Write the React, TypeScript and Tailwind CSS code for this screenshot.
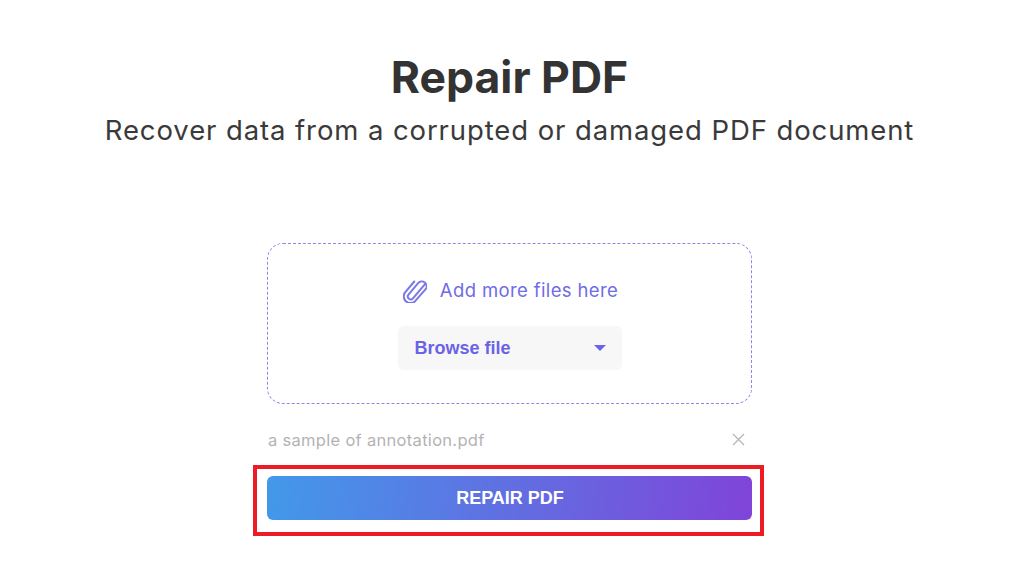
import React from "react";

export default function App() {
  return (
    <div className="w-[1019px] h-[568px] bg-white flex flex-col items-center overflow-hidden font-['Inter','Liberation_Sans',sans-serif]">
      <h1 className="mt-[52px] h-[50px] leading-[50px] text-[44.5px] font-bold text-[#333333] whitespace-nowrap">Repair PDF</h1>
      <p className="mt-[13px] h-[30px] leading-[30px] text-[27.5px] text-[#3a3a3a] tracking-[0.9px] whitespace-nowrap">Recover data from a corrupted or damaged PDF document</p>
      <div className="mt-[98px] w-[485px] h-[161px] rounded-[16px] border border-dashed border-[#8f84f0] flex flex-col items-center">
        <div className="mt-[34px] ml-[2px] h-[26px] flex items-center gap-[13px] text-[#6f6ce6]">
          <svg width="24" height="24" viewBox="2.5 1.5 20 20" fill="none" stroke="#7b78e8" strokeWidth="1.7" strokeLinecap="round" strokeLinejoin="round">
            <path d="M20.5 6.2 10.8 17.6a2.4 2.4 0 0 1-3.7-3.1l8-9.5a4 4 0 0 1 6.1 5.2L12.6 20a5.6 5.6 0 0 1-8.5-7.2l7.8-9.2" />
          </svg>
          <span className="text-[18.5px] tracking-[0.37px] whitespace-nowrap">Add more files here</span>
        </div>
        <div className="mt-[22px] w-[224px] h-[44px] rounded-[6px] bg-[#f7f7f8] flex items-center justify-between pl-[17px] pr-[16px]">
          <span className="font-['Liberation_Sans',sans-serif] font-bold text-[18px] text-[#6a63e6]">Browse file</span>
          <span className="w-0 h-0 border-l-[6px] border-r-[6px] border-t-[6px] border-l-transparent border-r-transparent border-t-[#6a63e6]"></span>
        </div>
      </div>
      <div className="mt-[23px] w-[485px] h-[26px] flex items-center justify-between">
        <span className="ml-[1px] text-[16.5px] text-[#b3b3b3] tracking-[0.3px] whitespace-nowrap">a sample of annotation.pdf</span>
        <svg className="mr-[7px] mb-[2px]" width="13" height="13" viewBox="0 0 13 13" fill="none" stroke="#b5b5b5" strokeWidth="1.3">
          <path d="M1 1l11 11M12 1 1 12" />
        </svg>
      </div>
      <div className="mt-[12px] mr-[2px] w-[511px] h-[71px] border-[4px] border-[#ed1c24] flex items-start justify-start pt-[7px] pl-[10px]">
        <button className="w-[485px] h-[44px] rounded-[6px] bg-[linear-gradient(97deg,#4299ea,#8044d9)] text-white font-['Liberation_Sans',sans-serif] font-bold text-[18px] pl-[1px]">REPAIR PDF</button>
      </div>
    </div>
  );
}
